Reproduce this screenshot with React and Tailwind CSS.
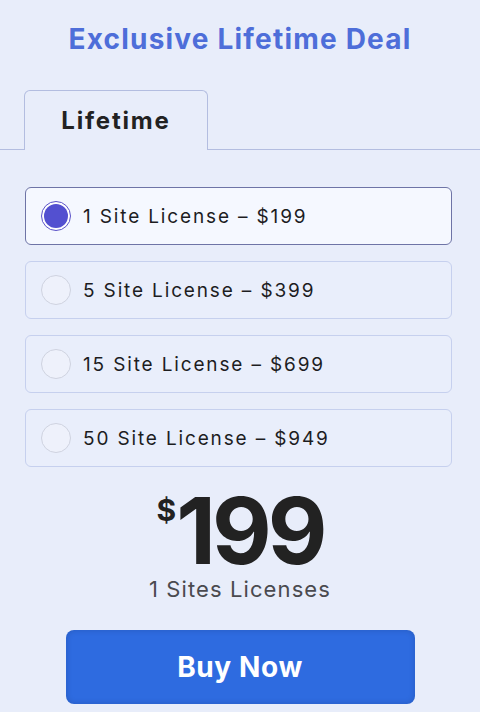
import React, { useState } from "react";

const plans = [
  { sites: 1, price: 199 },
  { sites: 5, price: 399 },
  { sites: 15, price: 699 },
  { sites: 50, price: 949 },
];

export default function App() {
  const [selected, setSelected] = useState(0);
  const current = plans[selected];

  return (
    <div
      className="min-h-[712px] w-[480px] bg-[#e8edfa] overflow-hidden"
      style={{ fontFamily: "Inter, 'Open Sans', sans-serif" }}
    >
      <h1 className="pt-[21px] text-center text-[28px] leading-[36px] font-bold tracking-[1.2px] text-[#4e6ed9]">
        Exclusive Lifetime Deal
      </h1>

      {/* tabs */}
      <div className="mt-[33px] flex border-b border-[#b3bde0] pl-[24px]">
        <div className="-mb-px flex h-[60px] w-[184px] items-center justify-center rounded-t-[6px] border border-b-0 border-[#b3bde0] bg-[#e8edfa]">
          <span className="text-[24px] font-bold tracking-[1.8px] text-[#222]">Lifetime</span>
        </div>
      </div>

      <div className="mt-[37px] flex flex-col gap-[16px] pl-[25px] pr-[28px]">
        {plans.map((p, i) => {
          const active = i === selected;
          return (
            <button
              key={p.sites}
              onClick={() => setSelected(i)}
              className={
                "flex h-[58px] items-center gap-[12px] rounded-[6px] border px-[15px] text-left " +
                (active
                  ? "border-[#6e74a6] bg-[#f5f8ff]"
                  : "border-[#c6d0ee] bg-[#e9eefb]")
              }
            >
              <span
                className={
                  "flex h-[30px] w-[30px] shrink-0 items-center justify-center rounded-full border " +
                  (active ? "border-[#5a52c8] bg-white" : "border-[#cfd3e0] bg-[#eef1fb]")
                }
              >
                {active && <span className="h-[24px] w-[24px] rounded-full bg-[#5350d0]" />}
              </span>
              <span className="pt-[2px] text-[19px] tracking-[1.85px] text-[#1d1d1f]">
                {p.sites} Site License – ${p.price}
              </span>
            </button>
          );
        })}
      </div>

      <div className="mt-[21px] flex flex-col items-center">
        <div className="flex items-start text-[#222]">
          <span className="mt-[7px] text-[30px] leading-[30px] font-bold">$</span>
          <span className="text-[92px] leading-[86px] font-bold tracking-[-4px]">{current.price}</span>
        </div>
        <div className="text-[22px] leading-[30px] tracking-[1.1px] text-[#4a4a4f]">
          {current.sites} Sites Licenses
        </div>
      </div>

      <div className="mt-[26px] flex justify-center">
        <button className="h-[74px] w-[349px] rounded-[8px] bg-[#2e6be0] text-[28px] font-bold tracking-[0.6px] text-white shadow-[inset_0_0_6px_rgba(0,0,0,0.15)]">
          Buy Now
        </button>
      </div>
    </div>
  );
}
